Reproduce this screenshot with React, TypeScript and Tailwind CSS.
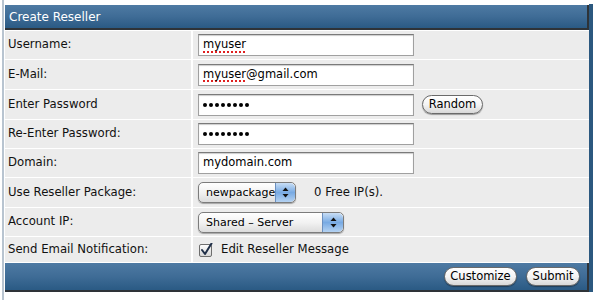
import React from "react";

const font = { fontFamily: '"DejaVu Sans", Verdana, sans-serif' };

function Field({ children }: { children: React.ReactNode }) {
  return (
    <div className="w-[216px] h-[22px] bg-white border border-[#a0a0a0] border-t-[#7a7a7a] shadow-[inset_0_1px_1px_rgba(0,0,0,0.2)] flex items-center pl-[4px] text-[11.5px] text-black leading-none">
      {children}
    </div>
  );
}

function Misspelled({ children }: { children: React.ReactNode }) {
  return (
    <span className="underline decoration-dotted decoration-[#e02020] decoration-2 underline-offset-[3px]">
      {children}
    </span>
  );
}

function Dots() {
  return (
    <div className="flex gap-[2px] items-center">
      {[0, 1, 2, 3, 4, 5, 6, 7].map((i) => (
        <div key={i} className="w-[4px] h-[4px] rounded-full bg-black" />
      ))}
    </div>
  );
}

function AquaButton({ children, w }: { children: React.ReactNode; w: string }) {
  return (
    <div
      className={`${w} h-[19px] rounded-full border border-[#6a6a6a] bg-gradient-to-b from-white via-[#f4f4f4] to-[#d8d8d8] shadow-[0_1px_1px_rgba(0,0,0,0.35)] flex items-center justify-center text-[11.5px] text-black leading-none`}
    >
      {children}
    </div>
  );
}

function SelectArrow() {
  return (
    <div className="w-[21px] h-full rounded-r-[5px] bg-gradient-to-b from-[#c8def5] via-[#78aae3] to-[#b4d2f2] border-l border-[#6b8fbf] flex items-center justify-center">
      <svg width="7" height="11" viewBox="0 0 7 11">
        <path d="M3.5 0.5 L6.5 4 L0.5 4 Z" fill="#111" />
        <path d="M3.5 10.5 L6.5 7 L0.5 7 Z" fill="#111" />
      </svg>
    </div>
  );
}

function AquaSelect({ label, w }: { label: string; w: string }) {
  return (
    <div
      className={`${w} h-[21px] rounded-[5px] border border-[#7c7c7c] bg-gradient-to-b from-white via-[#f2f2f2] to-[#dcdcdc] shadow-[0_1px_1px_rgba(0,0,0,0.3)] flex items-center overflow-hidden`}
    >
      <div className="flex-1 pl-[7px] text-[11px] text-black leading-none whitespace-nowrap">{label}</div>
      <SelectArrow />
    </div>
  );
}

function Row({ label, h, children }: { label: string; h: string; children: React.ReactNode }) {
  return (
    <div className={`flex ${h} border-b border-white`}>
      <div className="w-[188px] shrink-0 flex items-center pl-[3px] text-[11.7px] text-[#111] border-r-2 border-white">
        {label}
      </div>
      <div className="flex-1 flex items-center pl-[5px] gap-[8px]">{children}</div>
    </div>
  );
}

export default function App() {
  return (
    <div className="w-[593px] h-[300px] bg-white relative overflow-hidden" style={font}>
      <div className="absolute left-[2px] top-0 bottom-0 w-[2px] bg-[#b8c4d0]" />
      <div className="absolute right-0 top-[4px] bottom-[8px] w-[4px] bg-[#2b587f]" />
      <div className="flex flex-col pl-[5px] pr-[4px] pt-[5px]">
        <div className="h-[25px] bg-gradient-to-b from-[#4e7aa3] via-[#3f6c96] to-[#2a5a84] border-b-2 border-r-2 border-[#2e3338] flex items-center pl-[4px] text-white text-[12px]">
          Create Reseller
        </div>
        <div className="bg-[#ececec] border-t border-white">
          <Row label="Username:" h="h-[29px]">
            <Field>
              <Misspelled>myuser</Misspelled>
            </Field>
          </Row>
          <Row label="E-Mail:" h="h-[30px]">
            <Field>
              <Misspelled>myuser</Misspelled>@gmail.com
            </Field>
          </Row>
          <Row label="Enter Password" h="h-[30px]">
            <Field>
              <Dots />
            </Field>
            <AquaButton w="w-[61px]">Random</AquaButton>
          </Row>
          <Row label="Re-Enter Password:" h="h-[29px]">
            <Field>
              <Dots />
            </Field>
          </Row>
          <Row label="Domain:" h="h-[29px]">
            <Field>mydomain.com</Field>
          </Row>
          <Row label="Use Reseller Package:" h="h-[30px]">
            <AquaSelect label="newpackage" w="w-[98px]" />
            <span className="ml-[10px] text-[11.7px] text-[#111]">0 Free IP(s).</span>
          </Row>
          <Row label="Account IP:" h="h-[29px]">
            <AquaSelect label="Shared – Server" w="w-[146px]" />
          </Row>
          <Row label="Send Email Notification:" h="h-[26px]">
            <svg width="14" height="14" viewBox="0 0 14 14" className="ml-[1px]">
              <defs>
                <linearGradient id="cb" x1="0" y1="0" x2="0" y2="1">
                  <stop offset="0" stopColor="#ffffff" />
                  <stop offset="1" stopColor="#d4d4d4" />
                </linearGradient>
              </defs>
              <rect x="0.5" y="1.5" width="12" height="12" rx="1.5" fill="url(#cb)" stroke="#6e6e6e" />
              <path d="M3 7 L6 11 L12.5 0.5" fill="none" stroke="#1f2f48" strokeWidth="2" strokeLinecap="round" strokeLinejoin="round" />
            </svg>
            <span className="text-[11.7px] text-[#111]">Edit Reseller Message</span>
          </Row>
        </div>
        <div className="h-[29px] bg-gradient-to-b from-[#4e7aa3] via-[#3f6c96] to-[#2a5a84] border-b-2 border-r-2 border-[#2e3338] flex items-center justify-end gap-[9px] pr-[7px]">
          <AquaButton w="w-[73px]">Customize</AquaButton>
          <AquaButton w="w-[54px]">Submit</AquaButton>
        </div>
      </div>
    </div>
  );
}
